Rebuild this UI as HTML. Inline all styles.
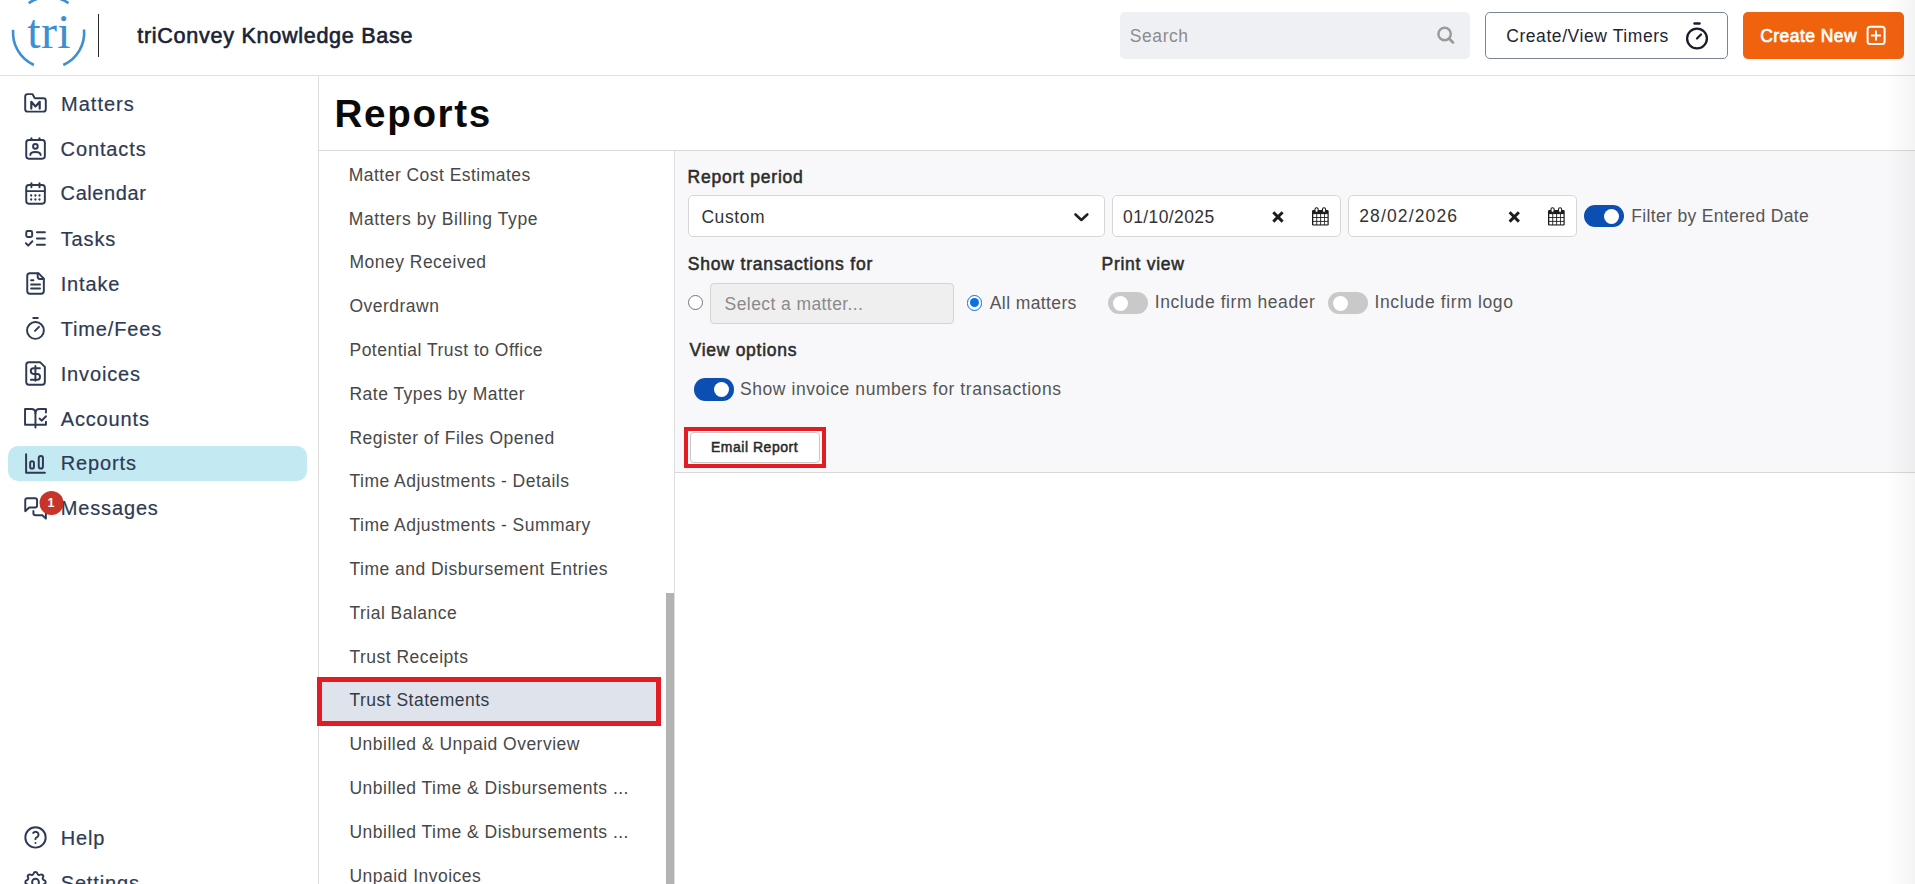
<!DOCTYPE html>
<html><head><meta charset="utf-8">
<style>
html,body{margin:0;padding:0;}
body{width:1915px;height:884px;overflow:hidden;background:#fff;position:relative;font-family:"Liberation Sans",sans-serif;}
.a{position:absolute;}
.t{position:absolute;white-space:nowrap;line-height:1;}
.nav{font-size:20px;color:#2e3a53;-webkit-text-stroke:0.2px #2e3a53;letter-spacing:0.86px;}
.li{font-size:17.5px;color:#484848;letter-spacing:0.48px;left:349.5px;}
.lbl{font-size:17.5px;font-weight:400;color:#2d2d2d;-webkit-text-stroke:0.55px #2d2d2d;}
.reg{font-size:17.5px;color:#555;}
.box{position:absolute;box-sizing:border-box;}
.ico{position:absolute;overflow:visible;}
</style></head>
<body>
<!-- HEADER -->
<div class="a" style="left:0;top:75px;width:1915px;height:1px;background:#dfe1e7"></div>
<svg class="ico" style="left:0;top:0" width="100" height="75" viewBox="0 0 100 75">
  <g fill="none" stroke="#3d8fd1" stroke-width="2.6">
    <path d="M68.51 3.09 A35.6 35.6 0 0 0 28.69 3.09"/>
    <path d="M13.11 29.81 A35.6 35.6 0 0 0 33.89 65.02"/>
    <path d="M63.31 65.02 A35.6 35.6 0 0 0 84.06 29.5"/>
  </g>
  <text x="27.3" y="47.6" font-family="Liberation Serif" font-size="48" fill="#3d8fd1" letter-spacing="0.3">tri</text>
</svg>
<div class="a" style="left:97.8px;top:14px;width:1.3px;height:43px;background:#2a2a2a"></div>
<div id="t0" class="t" style="left:137.2px;top:25.30px;letter-spacing:0.699px;font-size:21.6px;font-weight:400;color:#1a2233;-webkit-text-stroke:0.6px #1a2233">triConvey Knowledge Base</div>

<div class="box" style="left:1120px;top:12px;width:350px;height:47px;background:#eff0f3;border-radius:5px"></div>
<div id="t1" class="t" style="left:1129.8px;top:28px;letter-spacing:0.57px;font-size:17.5px;color:#8c8c8c">Search</div>
<svg class="ico" style="left:1430px;top:20px" width="30" height="30" viewBox="0 0 30 30">
  <circle cx="14.6" cy="14" r="6.2" fill="none" stroke="#9a9a9a" stroke-width="2.4"/>
  <line x1="19" y1="18.5" x2="23" y2="22.5" stroke="#9a9a9a" stroke-width="2.6" stroke-linecap="round"/>
</svg>

<div class="box" style="left:1485px;top:12px;width:243px;height:47px;border:1px solid #7b8496;border-radius:5px;background:#fff"></div>
<div id="t2" class="t" style="left:1506.2px;top:28px;letter-spacing:0.576px;font-size:17.5px;color:#1f2433">Create/View Timers</div>
<svg class="ico" style="left:1680px;top:18px" width="36" height="36" viewBox="0 0 36 36">
  <circle cx="17" cy="20.5" r="9.9" fill="none" stroke="#1a1d29" stroke-width="2.3"/>
  <line x1="14.5" y1="5.5" x2="19.5" y2="5.5" stroke="#1a1d29" stroke-width="2.4" stroke-linecap="round"/>
  <line x1="17" y1="20.5" x2="21" y2="16.5" stroke="#1a1d29" stroke-width="2.3" stroke-linecap="round"/>
</svg>

<div class="box" style="left:1743px;top:12px;width:161px;height:47px;background:#f1620f;border-radius:5px"></div>
<div id="t3" class="t" style="left:1760.2px;top:28.2px;letter-spacing:0.451px;font-size:17.5px;font-weight:400;color:#fff;-webkit-text-stroke:0.7px #fff">Create New</div>
<svg class="ico" style="left:1860px;top:20px" width="32" height="32" viewBox="0 0 32 32">
  <rect x="7.6" y="6.7" width="17" height="17.3" rx="2.5" fill="none" stroke="#fff" stroke-width="2"/>
  <line x1="11" y1="15.5" x2="21" y2="15.5" stroke="#fff" stroke-width="2"/>
  <line x1="16" y1="10.5" x2="16" y2="20.5" stroke="#fff" stroke-width="2"/>
</svg>

<!-- SIDEBAR -->
<div class="a" style="left:318px;top:76px;width:1px;height:808px;background:#dcdcdc"></div>
<div class="box" style="left:8px;top:446px;width:299px;height:35px;background:#c3e9f3;border-radius:10px"></div>
<div id="navtexts"></div>
<div id="t4" class="t nav" style="left:61.1px;top:94.2px;letter-spacing:0.993px">Matters</div>
<div id="t5" class="t nav" style="left:60.6px;top:139.13px;letter-spacing:0.874px">Contacts</div>
<div id="t6" class="t nav" style="left:60.6px;top:183.1px;letter-spacing:0.588px">Calendar</div>
<div id="t7" class="t nav" style="left:60.7px;top:228.99px">Tasks</div>
<div id="t8" class="t nav" style="left:60.7px;top:273.92px">Intake</div>
<div id="t9" class="t nav" style="left:60.7px;top:318.85px">Time/Fees</div>
<div id="t10" class="t nav" style="left:60.7px;top:363.78px">Invoices</div>
<div id="t11" class="t nav" style="left:60.7px;top:408.71px">Accounts</div>
<div id="t12" class="t nav" style="left:60.7px;top:453.3px">Reports</div>
<div id="t13" class="t nav" style="left:60.7px;top:498.2px">Messages</div>
<div id="t14" class="t nav" style="left:60.7px;top:828.30px">Help</div>
<div id="t15" class="t nav" style="left:60.7px;top:873.30px">Settings</div>

<!-- MAIN HEADING -->
<div id="t16" class="t" style="left:334.5px;top:94.8px;letter-spacing:1.667px;font-size:38.6px;font-weight:700;color:#0a0a0a">Reports</div>
<div class="a" style="left:319px;top:150px;width:1596px;height:1px;background:#d9d9d9"></div>

<!-- REPORT LIST -->
<div class="a" style="left:674px;top:151px;width:1px;height:733px;background:#dedede"></div>
<div class="a" style="left:319px;top:678px;width:338px;height:44px;background:#dfe3ec"></div>
<div id="list">
<div id="t17" class="t li" style="left:348.8px;top:167.2px;letter-spacing:0.465px">Matter Cost Estimates</div>
<div id="t18" class="t li" style="left:348.8px;top:210.7px;letter-spacing:0.589px">Matters by Billing Type</div>
<div id="t19" class="t li" style="top:254.40px">Money Received</div>
<div id="t20" class="t li" style="top:298.20px">Overdrawn</div>
<div id="t21" class="t li" style="top:342.00px">Potential Trust to Office</div>
<div id="t22" class="t li" style="top:385.80px">Rate Types by Matter</div>
<div id="t23" class="t li" style="top:429.60px">Register of Files Opened</div>
<div id="t24" class="t li" style="top:473.40px">Time Adjustments - Details</div>
<div id="t25" class="t li" style="top:517.20px">Time Adjustments - Summary</div>
<div id="t26" class="t li" style="top:561.00px">Time and Disbursement Entries</div>
<div id="t27" class="t li" style="top:604.80px">Trial Balance</div>
<div id="t28" class="t li" style="top:648.60px">Trust Receipts</div>
<div id="t29" class="t li" style="top:692.40px;color:#333a47">Trust Statements</div>
<div id="t30" class="t li" style="top:736.20px">Unbilled &amp; Unpaid Overview</div>
<div id="t31" class="t li" style="top:780.00px">Unbilled Time &amp; Disbursements ...</div>
<div id="t32" class="t li" style="top:823.80px">Unbilled Time &amp; Disbursements ...</div>
<div id="t33" class="t li" style="top:867.60px">Unpaid Invoices</div>
</div>
<div class="a" style="left:666px;top:593px;width:8px;height:291px;background:#b3b3b3"></div>
<div class="box" style="left:317px;top:677px;width:344px;height:49px;border:5px solid #e31b23"></div>

<!-- RIGHT PANEL -->
<div class="a" style="left:675px;top:151px;width:1240px;height:321px;background:#f8f8fa"></div>
<div class="a" style="left:675px;top:472px;width:1240px;height:1px;background:#d8d8d8"></div>

<div id="t34" class="t lbl" style="left:687.6px;top:168.70px;letter-spacing:0.766px">Report period</div>
<div class="box" style="left:688px;top:195px;width:417px;height:42px;background:#fff;border:1px solid #d6d6d6;border-radius:5px"></div>
<div id="t35" class="t" style="left:701.4px;top:208.5px;letter-spacing:0.59px;font-size:17.5px;color:#333">Custom</div>
<svg class="ico" style="left:1070px;top:208px" width="24" height="18" viewBox="0 0 24 18">
  <polyline points="5.5,6.5 11.4,12 17.3,6.5" fill="none" stroke="#222" stroke-width="2.6" stroke-linecap="round" stroke-linejoin="round"/>
</svg>

<div class="box" style="left:1112px;top:195px;width:229px;height:42px;background:#fff;border:1px solid #d6d6d6;border-radius:5px"></div>
<div id="t36" class="t" style="left:1123px;top:208.5px;letter-spacing:0.395px;font-size:17.5px;color:#333">01/10/2025</div>
<div class="box" style="left:1348px;top:195px;width:229px;height:42px;background:#fff;border:1px solid #d6d6d6;border-radius:5px"></div>
<div id="t37" class="t" style="left:1359.2px;top:208.1px;letter-spacing:1.138px;font-size:17.5px;color:#333">28/02/2026</div>

<div class="box" style="left:1584px;top:205px;width:40px;height:22px;background:#0b4fb3;border-radius:11px"></div>
<div class="box" style="left:1604px;top:208.5px;width:15px;height:15px;background:#fff;border-radius:50%"></div>
<div id="t38" class="t reg" style="left:1631.2px;top:207.6px;letter-spacing:0.349px">Filter by Entered Date</div>

<div id="t39" class="t lbl" style="left:687.8px;top:256.10px;letter-spacing:0.81px">Show transactions for</div>
<div id="t40" class="t lbl" style="left:1101.5px;top:255.80px;letter-spacing:0.732px">Print view</div>

<div class="box" style="left:688px;top:295px;width:15px;height:15px;border:1px solid #767676;border-radius:50%;background:#fff"></div>
<div class="box" style="left:710px;top:282.5px;width:244px;height:41px;background:#efefef;border:1px solid #d3d3d3;border-radius:4px"></div>
<div id="t41" class="t" style="left:724.6px;top:295.9px;letter-spacing:0.416px;font-size:17.5px;color:#8a8a8a">Select a matter...</div>
<div class="box" style="left:966.5px;top:295px;width:15.5px;height:15.5px;border:1.6px solid #0b70e0;border-radius:50%;background:#fff"></div>
<div class="box" style="left:969.8px;top:298.3px;width:9px;height:9px;border-radius:50%;background:#0b70e0"></div>
<div id="t42" class="t reg" style="left:989.8px;top:294.8px;letter-spacing:0.39px">All matters</div>

<div class="box" style="left:1108px;top:292px;width:40px;height:22px;background:#c9c9c9;border-radius:11px"></div>
<div class="box" style="left:1113px;top:295.5px;width:15px;height:15px;background:#fff;border-radius:50%"></div>
<div id="t43" class="t reg" style="left:1154.8px;top:294.3px;letter-spacing:0.57px">Include firm header</div>
<div class="box" style="left:1328.4px;top:292px;width:40px;height:22px;background:#c9c9c9;border-radius:11px"></div>
<div class="box" style="left:1333.4px;top:295.5px;width:15px;height:15px;background:#fff;border-radius:50%"></div>
<div id="t44" class="t reg" style="left:1374.5px;top:294.1px;letter-spacing:0.625px">Include firm logo</div>

<div id="t45" class="t lbl" style="left:689.6px;top:342.10px;letter-spacing:0.717px">View options</div>
<div class="box" style="left:694px;top:378px;width:40px;height:22.6px;background:#0b4fb3;border-radius:11.3px"></div>
<div class="box" style="left:714px;top:381.8px;width:15px;height:15px;background:#fff;border-radius:50%"></div>
<div id="t46" class="t reg" style="left:740px;top:380.5px;letter-spacing:0.566px">Show invoice numbers for transactions</div>

<div class="box" style="left:690px;top:432px;width:130px;height:30.6px;background:#fff;border:1px solid #c8c8c8;border-radius:4px"></div>
<div id="t47" class="t" style="left:710.9px;top:439.90px;letter-spacing:0.526px;font-size:14px;font-weight:400;color:#2a2a2a;-webkit-text-stroke:0.5px #2a2a2a">Email Report</div>
<div class="box" style="left:684.2px;top:427.1px;width:141.5px;height:41px;border:4.8px solid #e31b23"></div>


<div class="a" style="left:1885px;top:0;width:30px;height:884px;background:linear-gradient(to right,rgba(0,0,0,0),rgba(0,0,0,0.045))"></div>
<!-- ICON OVERLAY -->
<svg class="a" style="left:0;top:0;pointer-events:none" width="1915" height="884" viewBox="0 0 1915 884">
 <g fill="none" stroke="#2e3a53" stroke-width="1.95" stroke-linecap="round" stroke-linejoin="round">
  <!-- Matters folder -->
  <path d="M25.2 96.6 C25.2 95.1 26.1 94.1 27.6 94.1 H32.4 L34.8 98.2 H43.4 C44.9 98.2 45.8 99.2 45.8 100.6 V109.2 C45.8 110.7 44.9 111.6 43.4 111.6 H27.6 C26.1 111.6 25.2 110.7 25.2 109.2 Z"/>
  <path d="M31.3 108.6 V101.8 L35.5 106.4 L39.7 101.8 V108.6" stroke-width="2.2"/>
  <!-- Contacts -->
  <rect x="26.25" y="140.05" width="18.6" height="18.6" rx="2.6"/>
  <line x1="31.4" y1="138.2" x2="31.4" y2="140"/>
  <line x1="39.5" y1="138.2" x2="39.5" y2="140"/>
  <circle cx="35.4" cy="146.4" r="2.3"/>
  <path d="M30.3 155 C30.3 152.6 32.2 151.9 35.4 151.9 C38.6 151.9 40.6 152.6 40.6 155"/>
  <!-- Calendar -->
  <rect x="26.25" y="185.05" width="18.6" height="18.6" rx="2.6"/>
  <line x1="31.4" y1="183.2" x2="31.4" y2="187.2"/>
  <line x1="39.5" y1="183.2" x2="39.5" y2="187.2"/>
  <line x1="26.4" y1="191.1" x2="44.7" y2="191.1"/>
  <!-- Tasks -->
  <rect x="26.25" y="231.05" width="5.9" height="5.9" rx="1.4"/>
  <path d="M25.9 243.3 L28.2 245.6 L32.4 241.3"/>
  <line x1="36.9" y1="232.2" x2="44.9" y2="232.2"/>
  <line x1="36.9" y1="238.4" x2="44.9" y2="238.4"/>
  <line x1="36.9" y1="244.7" x2="44.9" y2="244.7"/>
  <!-- Intake -->
  <path d="M38.4 273.15 H29.9 C28.4 273.15 27.25 274.3 27.25 275.8 V291 C27.25 292.5 28.4 293.65 29.9 293.65 H41.2 C42.7 293.65 43.85 292.5 43.85 291 V278.6 Z"/>
  <path d="M37.7 273.4 V276.8 C37.7 278 38.5 278.9 39.8 278.9 H43.6"/>
  <line x1="31.1" y1="280.2" x2="33.4" y2="280.2"/>
  <line x1="31.1" y1="284.5" x2="40" y2="284.5"/>
  <line x1="31.1" y1="288.5" x2="40" y2="288.5"/>
  <!-- Time/Fees -->
  <circle cx="35.45" cy="330.45" r="8.4"/>
  <line x1="33.3" y1="318" x2="37.8" y2="318"/>
  <line x1="35" y1="330.9" x2="39" y2="326.9"/>
  <!-- Invoices -->
  <path d="M40 362.15 H28.9 C27.4 362.15 26.25 363.3 26.25 364.8 V382.1 C26.25 383.6 27.4 384.75 28.9 384.75 H42.2 C43.7 384.75 44.85 383.6 44.85 382.1 V366.9 Z"/>
  <path d="M39.9 368.3 H33.4 C31.8 368.3 30.8 369.5 30.8 371.1 C30.8 372.8 31.8 373.9 33.4 373.9 H37.4 C39 373.9 40 375.1 40 376.8 C40 378.5 39 379.7 37.4 379.7 H30.9"/>
  <line x1="35.4" y1="366" x2="35.4" y2="380.8"/>
  <!-- Accounts -->
  <path d="M35.45 427.4 V413.2 C35.45 410.6 33.9 409.05 31.3 409.05 H25.05 V424.65 H45.95 V421.8"/>
  <path d="M35.45 413.2 C35.45 410.6 37 409.05 39.6 409.05 H45.95 V412.5"/>
  <path d="M39.6 418.5 L41.6 420.7 L46 416.3"/>
  <!-- Reports -->
  <path d="M26.1 454.3 V472.8 H44.9"/>
  <rect x="30.15" y="461.15" width="3.8" height="7.4" rx="1.9"/>
  <rect x="38.75" y="455.95" width="4.2" height="12.6" rx="2.1"/>
  <!-- Messages -->
  <path d="M25.25 511.2 V500.2 C25.25 499 26.1 498.15 27.3 498.15 H35.1 C36.3 498.15 37.05 499 37.05 500.2 V505.4 C37.05 506.6 36.3 507.45 35.1 507.45 H29.2 Z"/>
  <path d="M33.4 511 V513.2 C33.4 514.4 34.2 515.2 35.4 515.2 H42.3 L45.9 518.6 V510"/>
  <!-- Help -->
  <g transform="translate(21.94,823.89) scale(1.13)" stroke-width="1.73">
   <circle cx="12" cy="12" r="9"/>
   <path d="M12 17 l0 .01"/>
   <path d="M12 13.5 a1.5 1.5 0 0 1 1 -1.5 a2.6 2.6 0 1 0 -3 -4"/>
  </g>
  <!-- Settings gear (tabler) -->
  <g transform="translate(21.94,868.64) scale(1.13)" stroke-width="1.73">
   <path d="M10.325 4.317c.426 -1.756 2.924 -1.756 3.35 0a1.724 1.724 0 0 0 2.573 1.066c1.543 -.94 3.31 .826 2.37 2.37a1.724 1.724 0 0 0 1.065 2.572c1.756 .426 1.756 2.924 0 3.35a1.724 1.724 0 0 0 -1.066 2.573c.94 1.543 -.826 3.31 -2.37 2.37a1.724 1.724 0 0 0 -2.572 1.065c-.426 1.756 -2.924 1.756 -3.35 0a1.724 1.724 0 0 0 -2.573 -1.066c-1.543 .94 -3.31 -.826 -2.37 -2.37a1.724 1.724 0 0 0 -1.065 -2.572c-1.756 -.426 -1.756 -2.924 0 -3.35a1.724 1.724 0 0 0 1.066 -2.573c-.94 -1.543 .826 -3.31 2.37 -2.37c1 .608 2.296 .07 2.572 -1.065z"/>
   <circle cx="12" cy="12" r="3"/>
  </g>
 </g>
 <g fill="#2e3a53">
  <circle cx="31.2" cy="195.5" r="1.15"/><circle cx="35.4" cy="195.5" r="1.15"/><circle cx="39.5" cy="195.5" r="1.15"/>
  <circle cx="31.2" cy="199.5" r="1.15"/><circle cx="35.4" cy="199.5" r="1.15"/><circle cx="39.5" cy="199.5" r="1.15"/>
 </g>
 <!-- badge -->
 <circle cx="51.5" cy="503.1" r="12" fill="#c6342a"/>
 <text x="51.1" y="507.3" text-anchor="middle" font-family="Liberation Sans" font-size="12.5" font-weight="700" fill="#fff">1</text>
 <!-- date clear X -->
 <g stroke="#1c1c1c" stroke-width="2.9" stroke-linecap="butt">
  <path d="M1273.3 212.3 L1282.6 221.6 M1282.6 212.3 L1273.3 221.6"/>
  <path d="M1509.6 212.3 L1518.9 221.6 M1518.9 212.3 L1509.6 221.6"/>
 </g>
 <!-- calendar icons -->
 <g id="cal1" transform="translate(1312,207.8)">
  <rect x="0" y="2.3" width="16.7" height="15.4" rx="1.3" fill="#1c1c1c"/>
  <g fill="#fff">
   <rect x="1.3" y="6.3" width="3" height="3"/><rect x="5.2" y="6.3" width="3" height="3"/><rect x="9.1" y="6.3" width="3" height="3"/><rect x="12.9" y="6.3" width="2.6" height="3"/>
   <rect x="1.3" y="10.2" width="3" height="2.9"/><rect x="5.2" y="10.2" width="3" height="2.9"/><rect x="9.1" y="10.2" width="3" height="2.9"/><rect x="12.9" y="10.2" width="2.6" height="2.9"/>
   <rect x="1.3" y="14" width="3" height="2.6"/><rect x="5.2" y="14" width="3" height="2.6"/><rect x="9.1" y="14" width="3" height="2.6"/><rect x="12.9" y="14" width="2.6" height="2.6"/>
  </g>
  <rect x="3" y="0" width="3.1" height="4.6" rx="1.5" fill="#fff" stroke="#1c1c1c" stroke-width="1.1"/>
  <rect x="10.5" y="0" width="3.1" height="4.6" rx="1.5" fill="#fff" stroke="#1c1c1c" stroke-width="1.1"/>
 </g>
 <use href="#cal1" transform="translate(236,0)"/>
</svg>
</body></html>
